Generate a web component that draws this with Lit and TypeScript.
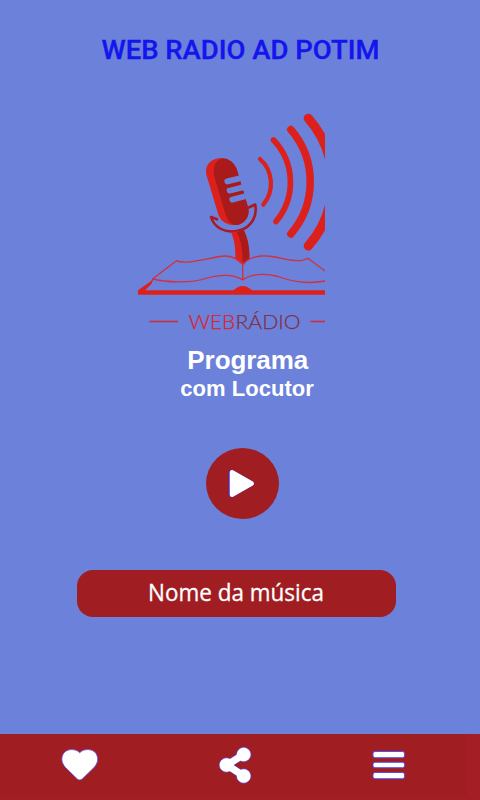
import { LitElement, html, css } from "lit";
import { customElement } from "lit/decorators.js";

@customElement("radio-logo")
class RadioLogo extends LitElement {
  static styles = css`
    :host { display: block; width: 195px; height: 235px; }
    svg { display: block; }
    .line { fill: none; stroke: #d2303c; stroke-width: 1.3; stroke-linejoin: round; }
    .rule { fill: none; stroke: #cf2a35; stroke-width: 1.6; }
    .wave { fill: none; stroke: #dc211c; stroke-linecap: round; }
    .red { fill: #dc211c; }
    .dark { fill: #a91a1b; }
    .cup { fill: none; stroke: #a91a22; stroke-width: 2.6; stroke-linecap: round; stroke-linejoin: round; }
    .slot { fill: none; stroke: #6c81da; stroke-width: 6; stroke-linecap: round; }
    .grille { fill: none; stroke: #a91a1b; stroke-width: 2.8; stroke-linecap: round; }
    .word { font-family: Lato, sans-serif; font-weight: 300; font-size: 20.3px; stroke-width: .25; }
    .web { fill: #d6252f; stroke: #d6252f; }
    .radio { fill: #7d3045; stroke: #7d3045; }
  `;
  render() {
    return html`<svg width="195" height="235" viewBox="130 105 195 235">
      <path class="wave" stroke-width="4.200" d="M260 159A33 33 0 0 1 263.300 204.700" />
      <path class="wave" stroke-width="5.700" d="M273.500 140A61 61 0 0 1 276 221.500" />
      <path class="wave" stroke-width="7.500" d="M290.800 129.500A80 80 0 0 1 290.800 234" />
      <path class="wave" stroke-width="9.300" d="M308.300 118.300A97 97 0 0 1 308.300 246" />
      <path class="red" d="M206.700 176C204 165 211 158.300 221 158.300C229 158.300 235 163 237.300 171L248 207C251 217 243 225 236 225C228 225.500 221 222 218.500 215Z" />
      <path class="dark" d="M222 158.300C214.500 161 212.500 168 214.500 177L224.500 211C226.500 218 229 223 234 225C243 226 251 217 248 207L237.300 171C235 163 229 158.300 222 158.300Z" />
      <path class="slot" d="M227.400 181.400L246 176.900M229.700 190.500L248 186M232.300 199.600L243.600 196.700" />
      <path class="grille" d="M228 186.600L239.300 183.700M231 195.200L242 192.300" />
      <path class="cup" d="M217 219.300L211 217C214 227 223 231.500 232.500 231.500C248 231.500 258 219 255.200 204.500L248.800 207.500" />
      <path class="red" d="M231 232L244 230.500Q250 243 249.300 259L242.700 265L235.300 259Q236 243 231 232Z" />
      <path class="dark" d="M237 232L244 230.500Q250 243 249.300 259L242.700 265Q243 244 237 232Z" />
      <path class="line" d="M152.500 279L176.500 260.700C185 265 205 259 220 256.500C231 254.500 238 259 242.700 264C247 259 257 255 267 256C280 257 293 262 302 260.500L308 258.300L325 271" />
      <path class="line" d="M144 290.500L150.500 284L153 279C165 282 190 284 207 278C222 273.500 235 275 242.700 280C250 274 265 273 278 276.500C293 282 310 284 325 281M242.700 264V280" />
      <path class="red" d="M138 290.300L150.500 281.500L153 279L151 284L144.500 290.300H233.500Q242.700 281.500 252 290.300H325V294.800H138Z" />
      <path class="rule" d="M149.500 321.500H178M310.500 321.500H325" />
      <text class="word web" x="188.700" y="328.900" textLength="46.500" lengthAdjust="spacingAndGlyphs">WEB</text>
      <text class="word radio" x="235.500" y="328.900" textLength="65" lengthAdjust="spacingAndGlyphs">RÁDIO</text>
    </svg>`;
  }
}

@customElement("app-root")
class AppRoot extends LitElement {
  static styles = css`
    :host { display: flex; flex-direction: column; width: 480px; height: 800px; background: #6c81da; overflow: hidden; }
    svg { display: block; overflow: visible; }
    .header { height: 70px; padding-top: 35px; box-sizing: border-box; }
    .title { font: 500 26px Roboto, sans-serif; fill: #1414ed; stroke: #1414ed; stroke-width: .35; }
    .logo { margin: 35px 0 0 130px; }
    .show { height: 70px; }
    .name { font: 700 26px "Liberation Sans", sans-serif; fill: #fff; }
    .host { font: 700 22px "Liberation Sans", sans-serif; fill: #fff; }
    .play { margin: 38px 0 0 206px; width: 73px; height: 71px; padding: 0; border: 0; background: none; }
    .song { margin: 51px 0 0 77px; width: 319px; height: 47px; border-radius: 16px; background: #a01d22; }
    .track { font: 400 23.5px "Open Sans", sans-serif; fill: #fff; stroke: #fff; stroke-width: .3; }
    .bar { margin-top: auto; height: 66px; display: flex; box-sizing: border-box; background: #a01d22; border-right: 13px solid #a31f25; border-bottom: 4px solid #a31f25; }
    .heart { margin: 14px 0 0 61px; }
    .share { margin: 12px 0 0 120px; }
    .menu { margin: 15px 0 0 120px; }
  `;
  render() {
    return html`
      <header class="header">
        <svg width="480" height="35"><text class="title" x="101.500" y="23.800" textLength="278" lengthAdjust="spacingAndGlyphs">WEB RADIO AD POTIM</text></svg>
      </header>
      <radio-logo class="logo"></radio-logo>
      <section class="show">
        <svg width="480" height="70">
          <text class="name" x="187.300" y="29" textLength="121">Programa</text>
          <text class="host" x="180.300" y="56" textLength="133.500">com Locutor</text>
        </svg>
      </section>
      <button class="play" aria-label="Play">
        <svg width="73" height="71">
          <ellipse cx="36.500" cy="35.500" rx="36.500" ry="35.500" fill="#a01d22" />
          <path d="M25.300 24.300V46.700L45.500 35.500Z" fill="#3333f5" stroke="#3333f5" stroke-width="5" stroke-linejoin="round" />
          <path d="M26 24.300V46.700L45.700 35.500Z" fill="#fff" stroke="#fff" stroke-width="4.500" stroke-linejoin="round" />
        </svg>
      </button>
      <div class="song">
        <svg width="319" height="47"><text class="track" x="71" y="30.600" textLength="176" lengthAdjust="spacingAndGlyphs">Nome da música</text></svg>
      </div>
      <nav class="bar">
        <svg class="heart" width="38" height="34">
          <path d="M18.700 4.800C15 .5 6 .3 2.500 5.500C-.5 11 1 15 4 19L16.500 31.200Q18.700 32.800 21 31.200L33.500 19C36.500 15 38 11 35 5.500C31.500 .3 22.500 .5 18.700 4.800Z" fill="#fff" stroke="#684eed" stroke-width=".8" />
        </svg>
        <svg class="share" width="33" height="38">
          <g fill="#5548ef" stroke="#5548ef"><path d="M24.700 8.500L8 19L24.700 30" fill="none" stroke-width="8" /><circle cx="24.700" cy="8.500" r="7" /><circle cx="7.500" cy="19" r="7" /><circle cx="24.700" cy="30" r="7" /></g>
          <g fill="#fff" stroke="#fff" stroke-width=".3"><path d="M24.700 8.500L8 19L24.700 30" fill="none" stroke-width="7" /><circle cx="24.700" cy="8.500" r="6.800" /><circle cx="7.500" cy="19" r="6.800" /><circle cx="24.700" cy="30" r="6.800" /></g>
        </svg>
        <svg class="menu" width="34" height="32">
          <g fill="#fff" stroke="#4646ff" stroke-width=".9"><rect x="1" y="2.500" width="31.500" height="6.200" rx="2" /><rect x="1" y="13.300" width="31.500" height="5.400" rx="2" /><rect x="1" y="23.500" width="31.500" height="6.200" rx="2" /></g>
        </svg>
      </nav>
    `;
  }
}
